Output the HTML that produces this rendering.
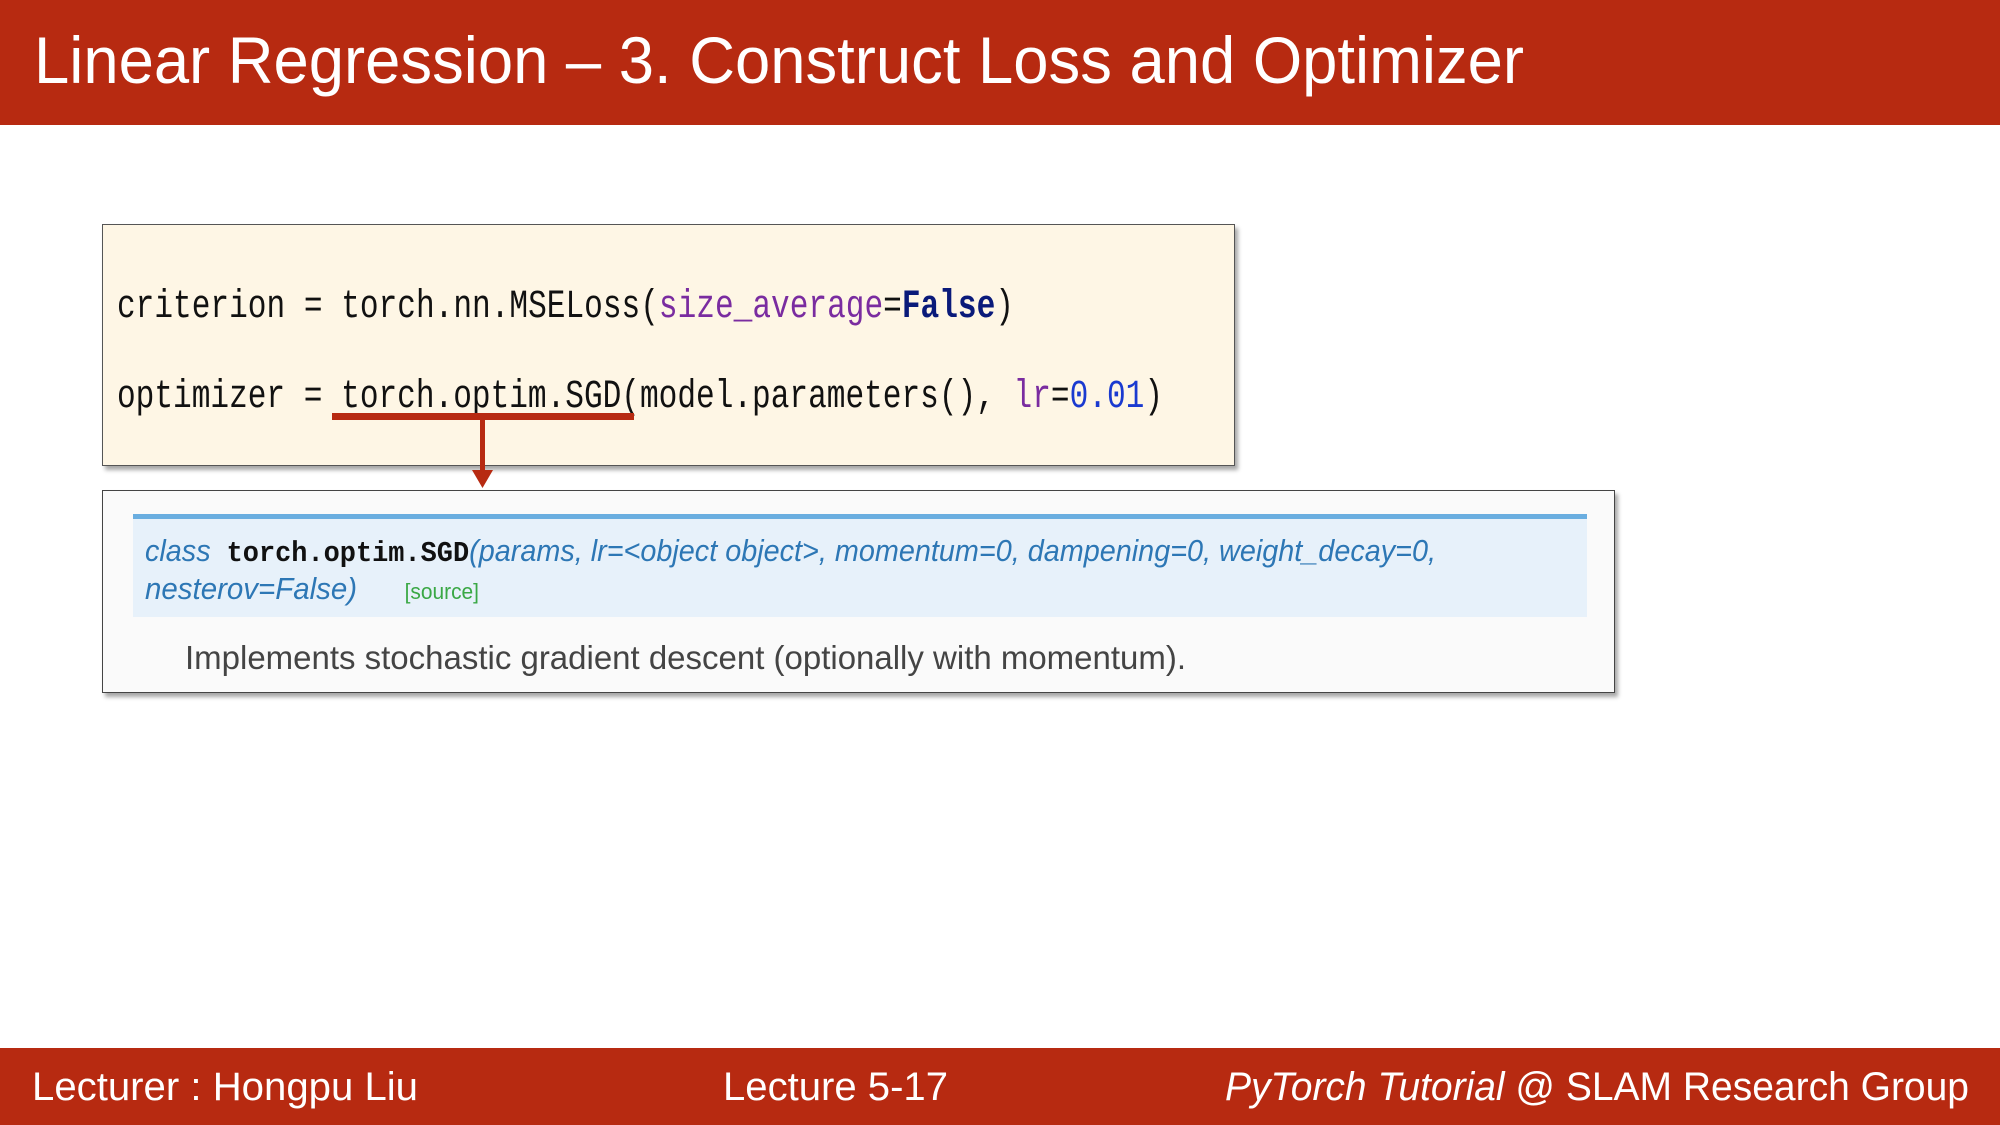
<!DOCTYPE html>
<html><head><meta charset="utf-8"><style>
*{margin:0;padding:0;box-sizing:border-box}
body{width:2000px;height:1125px;position:relative;background:#fff;overflow:hidden;font-family:"Liberation Sans",sans-serif}
.fit{position:absolute;white-space:nowrap;transform-origin:0 0;display:inline-block}
.hdr{position:absolute;left:0;top:0;width:2000px;height:125px;background:#b72a11}
.ftr{position:absolute;left:0;top:1048px;width:2000px;height:77px;background:#b72a11}
.w{color:#fff}
.code{position:absolute;left:102px;top:224px;width:1133px;height:242px;background:#fef6e5;border:1.5px solid #555;box-shadow:3px 4px 4px rgba(0,0,0,.35)}
.mono{font-family:"Liberation Mono",monospace;font-size:40px;color:#111}
.doc{position:absolute;left:102px;top:490px;width:1513px;height:203px;background:#fafafa;border:1.5px solid #444;box-shadow:3px 4px 4px rgba(0,0,0,.35)}
.band{position:absolute;left:133px;top:514px;width:1454px;height:103px;background:#e7f1fa;border-top:5px solid #6aaee0}
.it{font-style:italic;color:#2d77b5;font-size:31px}
</style></head><body>
<div class="hdr"></div>
<div class="fit w" data-w="1490" style="left:34px;top:20px;font-size:66px;line-height:80px">Linear Regression – 3. Construct Loss and Optimizer</div>

<div class="code"></div>
<div class="fit mono" data-w="897" style="left:117px;top:288px;line-height:40px">criterion = torch.nn.MSELoss(<span style="color:#7a2ca0">size_average</span>=<b style="color:#0a1a7a">False</b>)</div>
<div class="fit mono" data-w="1046" style="left:117px;top:378px;line-height:40px">optimizer = torch.optim.SGD(model.parameters(), <span style="color:#7a2ca0">lr</span>=<span style="color:#1a3ad0">0.01</span>)</div>
<div style="position:absolute;left:332px;top:413px;width:302px;height:7px;background:#b72a11"></div>
<div style="position:absolute;left:480px;top:418px;width:5px;height:56px;background:#b72a11"></div>
<svg style="position:absolute;left:472px;top:470px" width="21" height="20"><polygon points="0,0 21,0 10.5,18" fill="#b72a11"/></svg>

<div class="doc"></div>
<div class="band"></div>
<div class="fit" data-w="1291" style="left:145px;top:533px;line-height:36px"><span class="it">class&nbsp; </span><b style="font-family:'Liberation Mono',monospace;font-size:29px;color:#111">torch.optim.SGD</b><span class="it">(params, lr=&lt;object object&gt;, momentum=0, dampening=0, weight_decay=0,</span></div>
<div class="fit" data-w="334" style="left:145px;top:571px;line-height:36px"><span class="it">nesterov=False)</span><span style="font-size:22px;color:#3aa845;margin-left:50px">[source]</span></div>
<div class="fit" data-w="1001" style="left:185px;top:638px;font-size:33px;line-height:40px;color:#444">Implements stochastic gradient descent (optionally with momentum).</div>

<div class="ftr"></div>
<div class="fit w" data-w="386" style="left:32px;top:1064px;font-size:40px;line-height:46px">Lecturer : Hongpu Liu</div>
<div class="fit w" data-w="225" style="left:723px;top:1064px;font-size:40px;line-height:46px">Lecture 5-17</div>
<div class="fit w" data-w="744" style="left:1225px;top:1064px;font-size:40px;line-height:46px"><i>PyTorch Tutorial</i> @ SLAM Research Group</div>
<script>
document.querySelectorAll('.fit').forEach(function(e){var t=+e.dataset.w;var w=e.getBoundingClientRect().width;if(w>0)e.style.transform='scaleX('+(t/w)+')';});
</script>
</body></html>
